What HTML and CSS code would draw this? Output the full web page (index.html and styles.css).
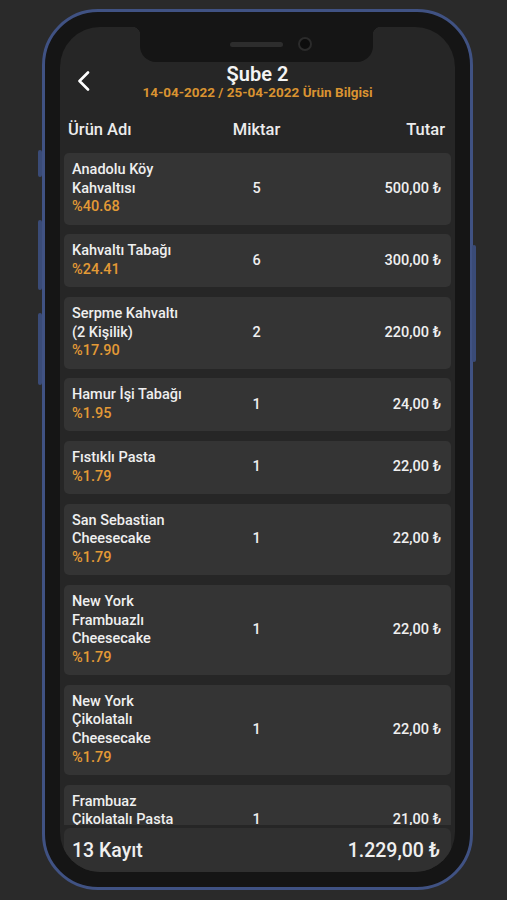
FILE: index.html
```html
<!DOCTYPE html>
<html lang="tr">
<head>
    <meta charset="UTF-8">
    <meta name="viewport" content="width=device-width, initial-scale=1.0">
    <title>Şube 2 - Ürün Bilgisi</title>
    <link rel="stylesheet" href="styles.css">
</head>
<body>

<div class="phone">
    <span class="side-btn btn-mute"></span>
    <span class="side-btn btn-vol-up"></span>
    <span class="side-btn btn-vol-down"></span>
    <span class="side-btn btn-power"></span>

    <div class="screen">
        <div class="notch">
            <span class="speaker"></span>
            <span class="camera"></span>
        </div>

        <div class="top-bar">
            <a class="back" href="#">
                <svg width="14" height="20" viewBox="0 0 14 20">
                    <path d="M11 1.5 L2.5 10 L11 18.5" fill="none" stroke="#fff" stroke-width="2.6" stroke-linecap="round" stroke-linejoin="round"/>
                </svg>
            </a>
            <div class="title-block">
                <h1 class="title">Şube 2</h1>
                <div class="subtitle">14-04-2022 / 25-04-2022 Ürün Bilgisi</div>
            </div>
            <div></div>
        </div>

        <div class="col-head">
            <span>Ürün Adı</span>
            <span class="center">Miktar</span>
            <span class="right">Tutar</span>
        </div>

        <div class="list">
            <div class="item">
                <div class="name">Anadolu Köy Kahvaltısı<span class="pct">%40.68</span></div>
                <div class="qty">5</div>
                <div class="amount">500,00 ₺</div>
            </div>
            <div class="item">
                <div class="name">Kahvaltı Tabağı<span class="pct">%24.41</span></div>
                <div class="qty">6</div>
                <div class="amount">300,00 ₺</div>
            </div>
            <div class="item">
                <div class="name">Serpme Kahvaltı (2&nbsp;Kişilik)<span class="pct">%17.90</span></div>
                <div class="qty">2</div>
                <div class="amount">220,00 ₺</div>
            </div>
            <div class="item">
                <div class="name">Hamur İşi Tabağı<span class="pct">%1.95</span></div>
                <div class="qty">1</div>
                <div class="amount">24,00 ₺</div>
            </div>
            <div class="item">
                <div class="name">Fıstıklı Pasta<span class="pct">%1.79</span></div>
                <div class="qty">1</div>
                <div class="amount">22,00 ₺</div>
            </div>
            <div class="item">
                <div class="name">San Sebastian Cheesecake<span class="pct">%1.79</span></div>
                <div class="qty">1</div>
                <div class="amount">22,00 ₺</div>
            </div>
            <div class="item">
                <div class="name">New York Frambuazlı Cheesecake<span class="pct">%1.79</span></div>
                <div class="qty">1</div>
                <div class="amount">22,00 ₺</div>
            </div>
            <div class="item">
                <div class="name">New York Çikolatalı Cheesecake<span class="pct">%1.79</span></div>
                <div class="qty">1</div>
                <div class="amount">22,00 ₺</div>
            </div>
            <div class="item">
                <div class="name">Frambuaz Çikolatalı Pasta<span class="pct">%1.71</span></div>
                <div class="qty">1</div>
                <div class="amount">21,00 ₺</div>
            </div>
        </div>

        <div class="footer">
            <span>13 Kayıt</span>
            <span>1.229,00 ₺</span>
        </div>
    </div>
</div>

</body>
</html>
```

FILE: styles.css
```css
body {
    margin: 0;
    background-color: #2a2a2a;
    font-family: Roboto, "Liberation Sans", Arial, sans-serif;
    color: #efefef;
}
.phone {
    position: relative;
    box-sizing: border-box;
    width: 431px;
    height: 881px;
    margin: 9px 0 0 42px;
    padding: 15px;
    border: 3px solid #405283;
    border-radius: 56px;
    background-color: #151515;
}
.side-btn {
    position: absolute;
    width: 4px;
    border-radius: 2px;
    background-color: #3a4b77;
}
.btn-mute {
    left: -7px;
    top: 138px;
    height: 27px;
}
.btn-vol-up {
    left: -7px;
    top: 208px;
    height: 70px;
}
.btn-vol-down {
    left: -7px;
    top: 301px;
    height: 72px;
}
.btn-power {
    right: -6px;
    top: 233px;
    height: 117px;
}
.screen {
    position: relative;
    box-sizing: border-box;
    height: 100%;
    padding-top: 36px;
    border-radius: 40px;
    overflow: hidden;
    background-color: #262626;
    display: flex;
    flex-direction: column;
}
.notch {
    position: absolute;
    top: 0;
    left: 80px;
    width: 233px;
    height: 35px;
    background-color: #151515;
    border-radius: 0 0 16px 16px;
}
.notch::before,
.notch::after {
    content: "";
    position: absolute;
    top: 0;
    width: 8px;
    height: 8px;
}
.notch::before {
    left: -8px;
    background: radial-gradient(circle at 0 100%, transparent 8px, #151515 8.5px);
}
.notch::after {
    right: -8px;
    background: radial-gradient(circle at 100% 100%, transparent 8px, #151515 8.5px);
}
.speaker {
    position: absolute;
    left: 90px;
    top: 15px;
    width: 53px;
    height: 5px;
    border-radius: 3px;
    background-color: #2d2d2d;
}
.camera {
    position: absolute;
    left: 158px;
    top: 10px;
    width: 10px;
    height: 10px;
    border: 2px solid #2b2b2b;
    border-radius: 50%;
    background-color: #0d0d0d;
}
.top-bar {
    display: grid;
    grid-template-columns: 1fr auto 1fr;
    align-items: center;
    padding: 0 17px;
}
.back {
    display: flex;
    width: 14px;
}
.title-block {
    text-align: center;
}
.title {
    margin: 0;
    font-size: 20px;
    line-height: 22px;
    font-weight: 600;
    color: #f4f4f4;
}
.subtitle {
    font-size: 13.5px;
    line-height: 14px;
    font-weight: 700;
    color: #d99331;
}
.col-head {
    display: grid;
    grid-template-columns: repeat(3, 1fr);
    margin-top: 21px;
    padding: 0 10px 0 8px;
    font-size: 16.5px;
    line-height: 20px;
    font-weight: 500;
    color: #ececec;
}
.center {
    text-align: center;
}
.right {
    text-align: right;
}
.list {
    flex: 1;
    min-height: 0;
    overflow: hidden;
    margin-top: 13px;
    padding: 0 4px;
    display: flex;
    flex-direction: column;
    gap: 9.5px;
}
.item {
    flex-shrink: 0;
    display: grid;
    grid-template-columns: repeat(3, 1fr);
    align-items: center;
    padding: 8px 10px 8px 8px;
    border-radius: 5px;
    background-color: #343434;
    font-size: 14.5px;
    line-height: 18.6px;
    font-weight: 500;
}
.pct {
    display: block;
    color: #e39a36;
}
.qty {
    text-align: center;
}
.amount {
    text-align: right;
}
.footer {
    flex-shrink: 0;
    height: 44px;
    margin: 3px 4px 0;
    padding: 0 11px 0 8px;
    border-radius: 6px 6px 0 0;
    background-color: #303030;
    display: flex;
    justify-content: space-between;
    align-items: center;
    font-size: 19.5px;
    font-weight: 500;
}
```
